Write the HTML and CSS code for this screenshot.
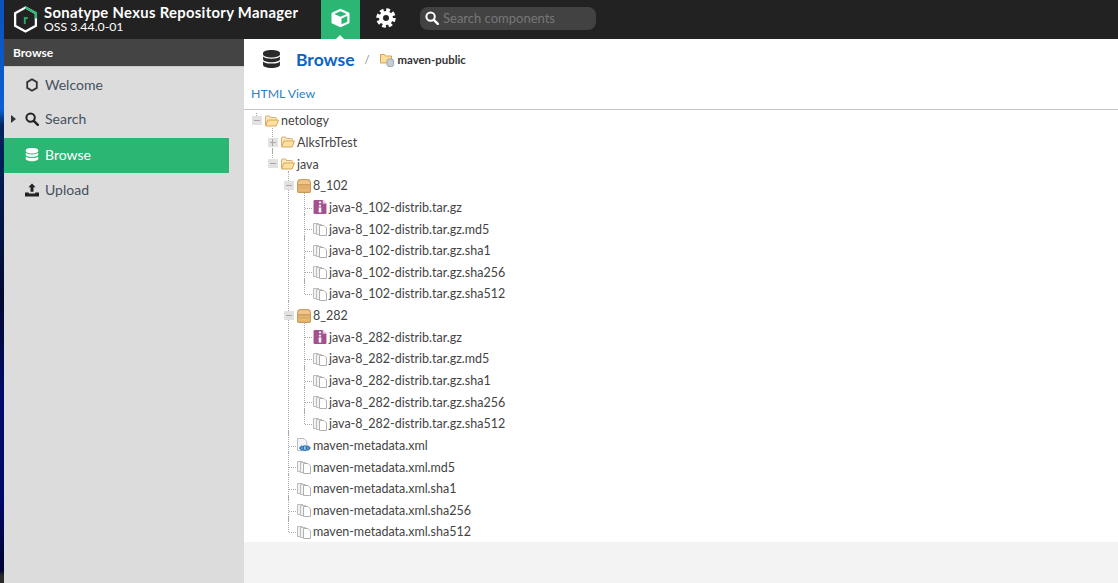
FILE: index.html
```html
<!DOCTYPE html>
<html>
<head>
  <meta name="viewport" content="width=device-width, initial-scale=1.0">
  <link rel="stylesheet" href="styles.css">
</head>

<body>
  <svg class="defs" width="0" height="0">
    <symbol id="i-db" viewBox="0 0 16 18">
      <path d="M8 0C3.600 0 0 1.200 0 2.800v1.400C0 5.800 3.600 7 8 7s8-1.200 8-2.800V2.800C16 1.200 12.400 0 8 0z"/>
      <path d="M0 6.200v2.600C0 10.400 3.600 11.600 8 11.600s8-1.200 8-2.800V6.200C14.600 7.700 11.500 8.300 8 8.300S1.400 7.700 0 6.200z"/>
      <path d="M0 10.800v3.400C0 15.800 3.600 17 8 17s8-1.200 8-2.800v-3.400c-1.400 1.500-4.500 2.100-8 2.100s-6.600-.6-8-2.100z"/>
    </symbol>
    <symbol id="i-search" viewBox="0 0 14 14">
      <circle cx="5.600" cy="5.600" r="4.200" fill="none" stroke="currentColor" stroke-width="2"/>
      <path d="M8.800 8.800l4 4" stroke="currentColor" stroke-width="2.400" stroke-linecap="round"/>
    </symbol>
    <symbol id="i-folder" viewBox="0 0 14 11">
      <path d="M.5 10V1.500q0-1 1-1h3l1 1.500h5q1 0 1 1V4" fill="#fbe9bd" stroke="#d8ad6c"/>
      <path d="M.6 10.500L2.800 4.500h10.700l-2.400 6z" fill="#fde0a0" stroke="#d8a65a"/>
    </symbol>
    <symbol id="i-chest" viewBox="0 0 14 12" preserveAspectRatio="none">
      <path d="M.5 5V3.500q0-3 3-3h7q3 0 3 3V5z" fill="#f0c58a" stroke="#d0a060"/>
      <rect x=".5" y="5" width="13" height="6.500" rx="1" fill="#e8b673" stroke="#cc9a58"/>
      <path d="M1 7.500h12" stroke="#d8a868"/>
    </symbol>
    <symbol id="i-jar" viewBox="0 0 12 13">
      <path d="M0 1q0-1 1-1h7.500L12 3.500V12q0 1-1 1H1q-1 0-1-1z" fill="#a4508f"/>
      <path d="M8.500 0v3.500H12z" fill="#e6c6de"/>
      <path d="M5 1.500h2v1.500H5zM5 4.500h2v1.500H5zM4.800 7h2.400v4.500H4.800z" fill="#fff"/>
    </symbol>
    <symbol id="i-pages" viewBox="0 0 14 14">
      <path d="M.5 11.500V1.500h5v10z" fill="#f3f3f3" stroke="#bcbcbc"/>
      <path d="M3.500 12.500V2.500h5v10z" fill="#f3f3f3" stroke="#bcbcbc"/>
      <path d="M6.500 13.500V3.500h4.500l2.500 2.500v7.500z" fill="#fff" stroke="#b0b0b0"/>
    </symbol>
    <symbol id="i-xml" viewBox="0 0 15 15">
      <path d="M.5 13.500V.5h7l3 3v10z" fill="#f3f6f9" stroke="#b0b6bc"/>
      <circle cx="8.500" cy="10.800" r="3" fill="#2a74b8"/>
      <path d="M5.800 8.300L3.200 10.800l2.600 2.500M11.200 8.300l2.600 2.500-2.600 2.500" fill="none" stroke="#2a74b8" stroke-width="1.700"/>
      <path d="M8.500 8.800v4" stroke="#fff"/>
    </symbol>
  </svg>

  <div class="strip"></div>

  <div class="app">
    <header class="topbar">
      <div class="brand">
        <svg class="logo" viewBox="0 0 24 26">
          <path d="M12 1.500L22 7v12l-10 5.500L2 19V7z" fill="none" stroke="#fff" stroke-width="2.200"/>
          <path d="M12 1.500L22 7v5" fill="none" stroke="#2bb673" stroke-width="2.200"/>
          <text x="12" y="17" class="logo-r">r</text>
        </svg>
        <div class="brand-text">
          <div class="brand-name">Sonatype Nexus Repository Manager</div>
          <div class="brand-version">OSS 3.44.0-01</div>
        </div>
      </div>
      <div class="mode-tab">
        <svg class="mode-icon" viewBox="0 0 20 20">
          <path d="M10 .8l8.200 3.700q.8.400.8 1.300v8.400q0 .9-.8 1.300L10 19.200l-8.200-3.700Q1 15.100 1 14.200V5.800q0-.9.800-1.300z" fill="#fff"/>
          <path d="M3.800 6L10 8.800 16.200 6 10 3.200zM11 10.500v5.800l5.800-2.600V7.900z" fill="#2bb673"/>
        </svg>
      </div>
      <svg class="gear" viewBox="0 0 20 20">
        <circle cx="10" cy="10" r="5" fill="none" stroke="#fff" stroke-width="4"/>
        <circle cx="10" cy="10" r="8" fill="none" stroke="#fff" stroke-width="3.400" stroke-dasharray="3.700 2.580"/>
      </svg>
      <div class="search-box">
        <svg class="search-icon"><use href="#i-search"/></svg>
        <span class="search-hint">Search components</span>
      </div>
    </header>

    <div class="main">
      <nav class="sidebar">
        <div class="sidebar-title">Browse</div>
        <ul class="menu">
          <li class="menu-item">
            <svg class="menu-icon" viewBox="0 0 14 14"><path d="M7 1.300l4.800 2.800v5.800L7 12.700 2.200 9.900V4.100z" fill="none" stroke="#333" stroke-width="1.800"/></svg>
            Welcome
          </li>
          <li class="menu-item has-arrow">
            <svg class="menu-icon"><use href="#i-search"/></svg>
            Search
          </li>
          <li class="menu-item active">
            <svg class="menu-icon"><use href="#i-db"/></svg>
            Browse
          </li>
          <li class="menu-item">
            <svg class="menu-icon" viewBox="0 0 14 14"><path d="M7 .5l3.600 3.800H8.500v4.500h-3V4.300H3.400z"/><path d="M0 9.500h3.800v1h6.400v-1H14V13.500H0z"/></svg>
            Upload
          </li>
        </ul>
      </nav>

      <section class="content">
        <div class="panel">
          <div class="crumbs">
            <svg class="crumb-db"><use href="#i-db"/></svg>
            <span class="crumb-title">Browse</span>
            <span class="crumb-sep">/</span>
            <svg class="crumb-repo" viewBox="0 0 14 14">
              <path d="M.5 10V1.500h4l1 1.500h6v7z" fill="#fbe09a" stroke="#d3a45a"/>
              <rect x="7" y="6" width="6.500" height="7.500" rx="2" fill="#c4ced6" stroke="#9aa6b0"/>
            </svg>
            <span class="crumb-repo-name">maven-public</span>
          </div>
          <div class="html-view"><a class="html-link">HTML View</a></div>

          <ul class="tree root">
            <li>
              <div class="node"><span class="toggle"></span><svg class="ico"><use href="#i-folder"/></svg>netology</div>
              <ul class="tree">
                <li>
                  <div class="node"><span class="toggle plus"></span><svg class="ico"><use href="#i-folder"/></svg>AlksTrbTest</div>
                </li>
                <li>
                  <div class="node"><span class="toggle"></span><svg class="ico"><use href="#i-folder"/></svg>java</div>
                  <ul class="tree">
                    <li>
                      <div class="node"><span class="toggle"></span><svg class="ico"><use href="#i-chest"/></svg>8_102</div>
                      <ul class="tree">
                        <li><div class="node file"><svg class="ico"><use href="#i-jar"/></svg>java-8_102-distrib.tar.gz</div></li>
                        <li><div class="node file"><svg class="ico"><use href="#i-pages"/></svg>java-8_102-distrib.tar.gz.md5</div></li>
                        <li><div class="node file"><svg class="ico"><use href="#i-pages"/></svg>java-8_102-distrib.tar.gz.sha1</div></li>
                        <li><div class="node file"><svg class="ico"><use href="#i-pages"/></svg>java-8_102-distrib.tar.gz.sha256</div></li>
                        <li><div class="node file"><svg class="ico"><use href="#i-pages"/></svg>java-8_102-distrib.tar.gz.sha512</div></li>
                      </ul>
                    </li>
                    <li>
                      <div class="node"><span class="toggle"></span><svg class="ico"><use href="#i-chest"/></svg>8_282</div>
                      <ul class="tree">
                        <li><div class="node file"><svg class="ico"><use href="#i-jar"/></svg>java-8_282-distrib.tar.gz</div></li>
                        <li><div class="node file"><svg class="ico"><use href="#i-pages"/></svg>java-8_282-distrib.tar.gz.md5</div></li>
                        <li><div class="node file"><svg class="ico"><use href="#i-pages"/></svg>java-8_282-distrib.tar.gz.sha1</div></li>
                        <li><div class="node file"><svg class="ico"><use href="#i-pages"/></svg>java-8_282-distrib.tar.gz.sha256</div></li>
                        <li><div class="node file"><svg class="ico"><use href="#i-pages"/></svg>java-8_282-distrib.tar.gz.sha512</div></li>
                      </ul>
                    </li>
                    <li><div class="node file"><svg class="ico"><use href="#i-xml"/></svg>maven-metadata.xml</div></li>
                    <li><div class="node file"><svg class="ico"><use href="#i-pages"/></svg>maven-metadata.xml.md5</div></li>
                    <li><div class="node file"><svg class="ico"><use href="#i-pages"/></svg>maven-metadata.xml.sha1</div></li>
                    <li><div class="node file"><svg class="ico"><use href="#i-pages"/></svg>maven-metadata.xml.sha256</div></li>
                    <li><div class="node file"><svg class="ico"><use href="#i-pages"/></svg>maven-metadata.xml.sha512</div></li>
                  </ul>
                </li>
              </ul>
            </li>
          </ul>
        </div>
      </section>
    </div>
  </div>
</body>
</html>
```

FILE: styles.css
```css
* {
  box-sizing: border-box;
}

html, body {
  height: 100%;
}

body {
  margin: 0;
  display: flex;
  overflow: hidden;
  font-family: "Lato", "Liberation Sans", sans-serif;
  color: #333;
  background-color: #f3f3f3;
}

ul {
  list-style: none;
  margin: 0;
  padding: 0;
}

.defs {
  position: absolute;
}

.strip {
  width: 4px;
  flex: none;
  background: linear-gradient(#0b52bd 0, #0a60d0 110px, #02245f 125px, #000a30 300px, #000a6e 400px, #00086a 500px, #000330 570px, #2a2a2a 576px);
}

.app {
  flex: 1;
  display: flex;
  flex-direction: column;
  min-width: 0;
}

/* top bar */
.topbar {
  height: 39px;
  flex: none;
  display: flex;
  align-items: center;
  background-color: #222;
  color: #fff;
}

.brand {
  width: 317px;
  display: flex;
  align-items: center;
  padding-left: 9px;
}

.logo {
  width: 25px;
  height: 27px;
  margin-right: 6px;
}

.logo-r {
  font-family: "Lato", sans-serif;
  font-size: 12px;
  font-weight: bold;
  fill: #2bb673;
  text-anchor: middle;
}

.brand-text {
  margin-bottom: 2px;
}

.brand-name {
  font-size: 14.8px;
  font-weight: bold;
  line-height: 15px;
  letter-spacing: .33px;
}

.brand-version {
  font-size: 12.3px;
  line-height: 13px;
}

.mode-tab {
  position: relative;
  width: 39px;
  height: 39px;
  display: flex;
  align-items: center;
  justify-content: center;
  padding-bottom: 4px;
  background-color: #2bb673;
}

.mode-tab::after {
  content: "";
  position: absolute;
  left: 15px;
  bottom: 0;
  border: 4px solid transparent;
  border-top: 0;
  border-bottom-color: #fff;
}

.mode-icon {
  width: 21px;
  height: 20px;
}

.gear {
  width: 20px;
  height: 20px;
  margin: 0 0 3px 16px;
}

.search-box {
  width: 176px;
  height: 23px;
  margin: 0 0 3px 24px;
  display: flex;
  align-items: center;
  padding-left: 5px;
  border-radius: 8px;
  background-color: #424242;
}

.search-icon {
  width: 14px;
  height: 14px;
  color: #fff;
}

.search-hint {
  margin-left: 4px;
  font-size: 13px;
  color: #777;
}

.main {
  flex: 1;
  display: flex;
  min-height: 0;
}

/* left menu */
.sidebar {
  width: 240px;
  flex: none;
  background-color: #dcdcdc;
}

.sidebar-title {
  height: 28px;
  padding: 6px 0 0 9px;
  font-size: 12px;
  font-weight: bold;
  color: #fff;
  background-color: #444;
  border-bottom: 1px solid #c9c9c9;
}

.menu {
  margin: 1px 15px 0 0;
}

.menu-item {
  position: relative;
  height: 35px;
  display: flex;
  align-items: center;
  padding: 0 0 2px 21px;
  font-size: 14px;
  color: #46505e;
}

.menu-item.has-arrow {
  padding-bottom: 4px;
}

.menu-item.active {
  background-color: #2bb673;
  color: #fff;
}

.menu-item.has-arrow::before {
  content: "";
  position: absolute;
  left: 7px;
  top: 12px;
  border: 4px solid transparent;
  border-left: 5px solid #333;
  border-right: 0;
}

.menu-icon {
  width: 14px;
  height: 14px;
  margin-right: 6px;
  color: #222;
  fill: #222;
}

.menu-item.active .menu-icon {
  fill: #fff;
}

/* right panel */
.content {
  flex: 1;
  min-width: 0;
}

.panel {
  height: 503px;
  background-color: #fff;
}

.crumbs {
  height: 41px;
  display: flex;
  align-items: center;
  padding-left: 19px;
}

.crumb-db {
  width: 17px;
  height: 19px;
  fill: #2a2a2a;
}

.crumb-title {
  margin-left: 16px;
  font-size: 17.5px;
  font-weight: bold;
  color: #0b63c4;
}

.crumb-sep {
  margin-left: 10px;
  font-size: 11px;
  color: #888;
}

.crumb-repo {
  width: 14px;
  height: 14px;
  margin-left: 10px;
}

.crumb-repo-name {
  margin-left: 4px;
  font-size: 11.4px;
  font-weight: bold;
}

.html-view {
  height: 30px;
  padding: 4px 0 0 7px;
  line-height: 16px;
  border-bottom: 1px solid #c8c8c8;
}

.html-link {
  font-size: 12.3px;
  color: #2a7fc9;
}

/* file tree */
.tree {
  padding-left: 16px;
}

.tree.root {
  padding-left: 8px;
}

.tree li {
  position: relative;
}

.tree li::before {
  content: "";
  position: absolute;
  left: 4px;
  top: -4px;
  bottom: 0;
  border-left: 1px dotted #aaa;
}

.tree li:last-child::before {
  bottom: auto;
  height: 15px;
}

.tree.root > li::before {
  top: 3px;
  height: 5px;
}

.node {
  position: relative;
  height: 21.65px;
  display: flex;
  align-items: center;
  padding-left: 13px;
  font-size: 12.5px;
  color: #444;
}

.node.file::before {
  content: "";
  position: absolute;
  left: 5px;
  top: 11px;
  width: 7px;
  border-top: 1px dotted #aaa;
}

.toggle {
  position: absolute;
  left: 0;
  top: 6px;
  width: 10px;
  height: 9px;
  background-color: #e2e2e2;
}

.toggle::before {
  content: "";
  position: absolute;
  left: 2px;
  top: 4px;
  width: 6px;
  border-top: 1px solid #a8a8a8;
}

.toggle.plus::after {
  content: "";
  position: absolute;
  left: 4px;
  top: 1px;
  height: 7px;
  border-left: 1px solid #a8a8a8;
}

.ico {
  width: 14px;
  height: 14px;
  margin-right: 2px;
  flex: none;
}
```
